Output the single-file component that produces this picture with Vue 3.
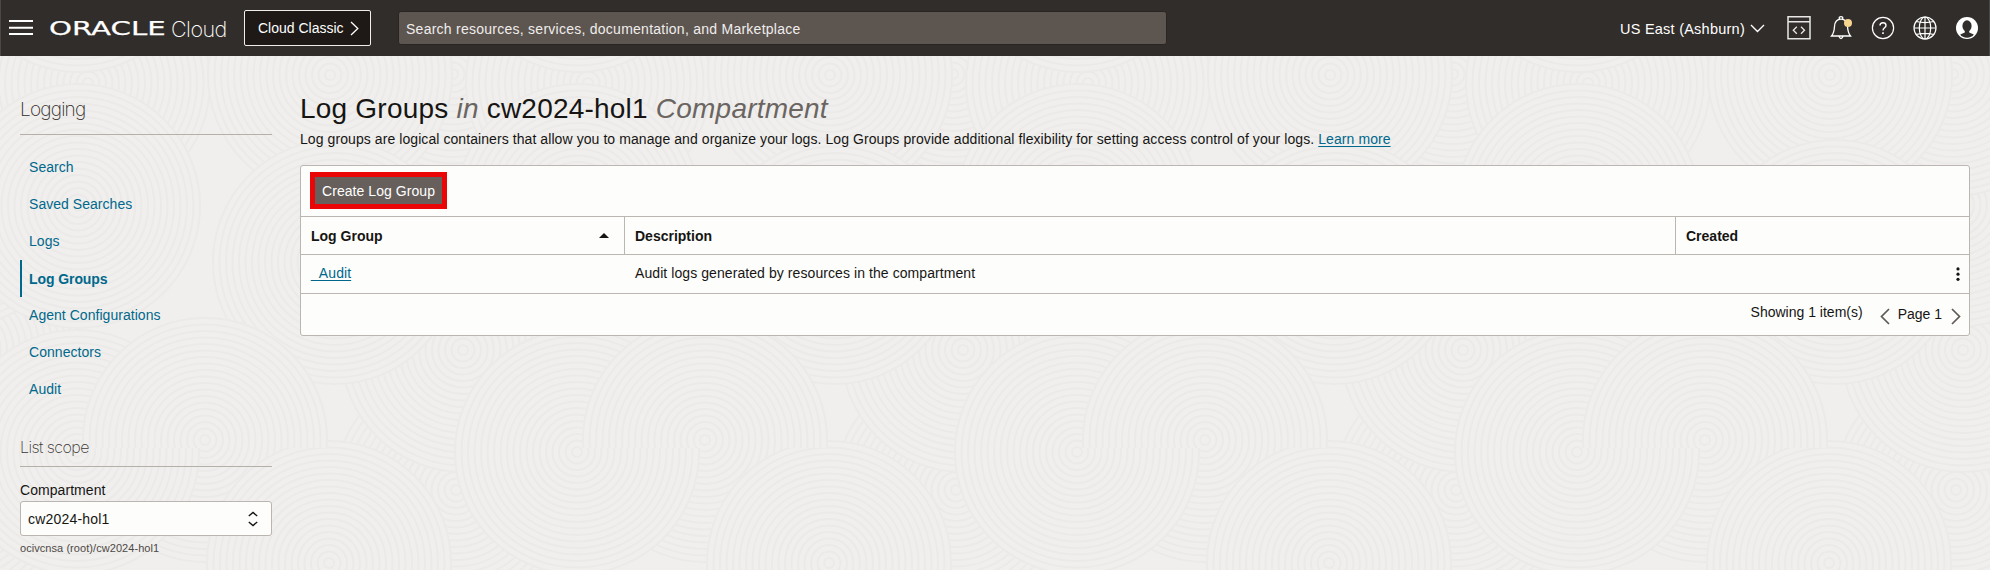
<script setup>
const nav = ['Search', 'Saved Searches', 'Logs', 'Log Groups', 'Agent Configurations', 'Connectors', 'Audit']
const selected = 'Log Groups'
const radii = Array.from({ length: 19 }, (_, i) => 122 - i * 6.5)
const tileDiscs = [
  [456, 490], [463, 350], [456, 205], [453, 74], [88, 83], [330, 75], [78, -50],
  [335, 262], [78, 206], [205, 440], [77, 452], [329, 563],
]
const tiles = [-500, 0, 500, 1000, 1500]
const discs = tileDiscs.flatMap(([x, y]) => tiles.map(t => ({ x: x + t, y })))
const overlaps = tiles.map(t => t + 205)
</script>

<template>
  <div class="page">
    <svg class="backdrop" width="1990" height="570" viewBox="0 0 1990 570" aria-hidden="true">
      <defs>
        <g id="ripple">
          <circle v-for="r in radii" :key="r" :r="r" fill="#f0efed" stroke="#ebeae8" stroke-width="2" />
        </g>
        <clipPath id="upper"><rect x="0" y="0" width="1990" height="448" /></clipPath>
      </defs>
      <use v-for="(d, i) in discs" :key="i" href="#ripple" :x="d.x" :y="d.y" />
      <g clip-path="url(#upper)">
        <use v-for="x in overlaps" :key="x" href="#ripple" :x="x" y="440" />
      </g>
    </svg>

    <header class="topbar">
      <svg class="burger" width="24" height="16" viewBox="0 0 24 16"><path d="M0 1h24M0 7.8h24M0 14h24" stroke="#fff" stroke-width="2" /></svg>
      <div class="brand"><span class="oracle"><span>ORACLE</span></span><span class="cloud">Cloud</span></div>
      <button class="classic">
        <span>Cloud Classic</span>
        <svg width="9" height="15" viewBox="0 0 9 15"><path d="M1 1l6.800 6.500L1 14" fill="none" stroke="#fff" stroke-width="1.3" /></svg>
      </button>
      <div class="search">Search resources, services, documentation, and Marketplace</div>
      <div class="region">
        <span>US East (Ashburn)</span>
        <svg width="15" height="9" viewBox="0 0 15 9"><path d="M1 1l6.500 6.500L14 1" fill="none" stroke="#fff" stroke-width="1.4" /></svg>
      </div>
      <svg class="icon code" width="24" height="24" viewBox="0 0 24 24" fill="none" stroke="#e8e7e5" stroke-width="1.500">
        <path d="M1 .8h22v22H1zM1 5.700h22" /><path d="M9.800 10.800L6.300 14.200l3.500 3.500M14 10.800l3.500 3.400-3.500 3.500" stroke-width="1.300" />
      </svg>
      <svg class="icon bell" width="24" height="26" viewBox="0 0 24 26" fill="none" stroke="#fff" stroke-width="1.300">
        <path d="M1.500 21c2.600-3 2.700-5 3-9.500C4.800 7 7 4.200 11 4.200s6.200 2.800 6.500 7.300c.3 4.500.5 6.500 3 9.500zM9.300 4V2.200q1.700-1.300 3.400 0V4M9 21.500q2 4 4 0" />
        <circle cx="18" cy="8" r="4" fill="#f6d58f" stroke="none" />
      </svg>
      <svg class="icon help" width="24" height="24" viewBox="0 0 24 24" fill="none" stroke="#fff" stroke-width="1.200">
        <circle cx="12" cy="12" r="10.600" /><path d="M9 9.600C9 5.800 15 5.900 15 9.500c0 2.400-3 2.300-3 5.100" stroke-width="1.400" /><path d="M12 16.200v1.800" stroke-width="1.600" />
      </svg>
      <svg class="icon globe" width="24" height="24" viewBox="0 0 24 24" fill="none" stroke="#fff" stroke-width="1.200">
        <circle cx="12" cy="12" r="11" /><ellipse cx="12" cy="12" rx="5.700" ry="11" /><path d="M12 1v22M1 12h22M3.200 5.500q8.800 2.200 17.600 0M3.200 18.500q8.800-2.200 17.600 0" />
      </svg>
      <svg class="icon user" width="24" height="24" viewBox="0 0 24 24">
        <circle cx="12" cy="12" r="11" fill="#fff" /><ellipse cx="12" cy="10" rx="4.600" ry="5.700" fill="#312d2a" /><path d="M9.800 14h4.400v2.600l4.600 2c-2.500 4.200-11.100 4.200-13.600 0l4.600-2z" fill="#312d2a" />
      </svg>
    </header>

    <div class="body">
      <aside class="sidebar">
        <h2 class="side-title">Logging</h2>
        <nav>
          <a v-for="n in nav" :key="n" class="nav-item" :class="{ active: n === selected }"><span>{{ n }}</span></a>
        </nav>
        <h3 class="scope-title">List scope</h3>
        <label class="field-label">Compartment</label>
        <div class="select">
          <span>cw2024-hol1</span>
          <svg width="10" height="16" viewBox="0 0 10 16" fill="none" stroke="#161513" stroke-width="1.400"><path d="M.8 5L5 1.500 9.200 5M.8 11L5 14.500 9.200 11" /></svg>
        </div>
        <div class="hint">ocivcnsa (root)/cw2024-hol1</div>
      </aside>

      <main class="main">
        <h1>Log Groups <i>in</i> cw2024-hol1 <i>Compartment</i></h1>
        <p class="intro">Log groups are logical containers that allow you to manage and organize your logs. Log Groups provide additional flexibility for setting access control of your logs. <a>Learn more</a></p>
        <section class="panel">
          <div class="toolbar"><button class="create">Create Log Group</button></div>
          <div class="row head">
            <div class="cell"><span>Log Group</span><svg width="10" height="5" viewBox="0 0 10 5"><path d="M0 5L5 0l5 5z" fill="#161513" /></svg></div>
            <div class="cell">Description</div>
            <div class="cell">Created</div>
          </div>
          <div class="row data">
            <div class="cell"><a class="audit">_Audit</a></div>
            <div class="cell">Audit logs generated by resources in the compartment</div>
            <div class="cell end"><svg width="4" height="14" viewBox="0 0 4 14" fill="#161513"><circle cx="2" cy="1.900" r="1.600" /><circle cx="2" cy="7.200" r="1.600" /><circle cx="2" cy="12.300" r="1.600" /></svg></div>
          </div>
          <div class="pager">
            <span class="count">Showing 1 item(s)</span>
            <svg class="prev" width="10" height="17" viewBox="0 0 10 17"><path d="M9 1L1.500 8.500 9 16" fill="none" stroke="#5f5a56" stroke-width="1.700" /></svg>
            <span class="pg">Page 1</span>
            <svg class="next" width="10" height="17" viewBox="0 0 10 17"><path d="M1 1l7.500 7.500L1 16" fill="none" stroke="#5f5a56" stroke-width="1.700" /></svg>
          </div>
        </section>
      </main>
    </div>
  </div>
</template>

<style>
body { margin: 0; }
</style>
<style scoped>
* { box-sizing: border-box; }
.page { position: relative; width: 1990px; height: 570px; overflow: hidden; background: #f0efed; color: #161513; font: 14px/20px "Liberation Sans", Arial, sans-serif; }
.backdrop { position: absolute; left: 0; top: 0; }
h1, h2, h3, p { margin: 0; font-weight: 400; }
svg { display: block; flex: none; }
button { font: inherit; padding: 0; margin: 0; }
.topbar { position: relative; display: flex; align-items: center; height: 56px; background: #312d2a; border-left: 1px solid #4b4744; border-right: 1px solid #4b4744; color: #fff; white-space: nowrap; }
.burger { margin-left: 8px; }
.brand { display: flex; margin-left: 16px; width: 195px; height: 30px; align-items: center; }
.oracle { width: 122px; }
.oracle span { display: inline-block; font: 20px/30px "DejaVu Sans", sans-serif; transform: scaleX(1.460); transform-origin: 0 50%; -webkit-text-stroke: .25px #fff; }
.cloud { font: 200 21.500px/30px Inter, sans-serif; letter-spacing: -.5px; padding-top: 1px; }
.classic { display: flex; align-items: center; width: 127px; height: 36px; padding-left: 13px; gap: 6px; background: #1e1916; border: 1px solid #f1efed; border-radius: 2px; color: #fff; }
.search { width: 769px; height: 34px; margin-left: 27px; padding: 1px 0 0 7px; line-height: 32px; letter-spacing: .255px; background: #5d5550; border: 1px solid #2a2522; border-radius: 3px; color: #efedeb; }
.region { display: flex; align-items: center; gap: 5px; margin-left: 453px; width: 145px; padding-top: 1px; }
.region span { font-size: 14.500px; letter-spacing: .240px; }
.code { margin-left: 22px; }
.bell { margin-left: 19px; }
.help { margin-left: 17px; }
.globe { margin-left: 18px; }
.user { margin-left: 18px; }
.body { position: relative; display: flex; }
.sidebar { width: 252px; margin-left: 20px; }
.side-title { height: 79px; border-bottom: 1px solid #b5b0a8; padding-top: 40px; font: 200 19px/28px Inter, sans-serif; letter-spacing: -.8px; color: #2f2b28; }
nav { margin-top: 14px; }
.nav-item { display: flex; align-items: center; height: 37px; padding: 0 0 2px 9px; color: #00688c; letter-spacing: .04px; }
.nav-item.active { border-left: 2px solid #00688c; padding: 0 0 0 7px; font-weight: 700; letter-spacing: -.08px; }
.scope-title { height: 59px; padding-top: 27px; border-bottom: 1px solid #b5b0a8; font: 200 16px/24px Inter, sans-serif; color: #3a3633; letter-spacing: -.55px; }
.field-label { display: block; margin-top: 13px; height: 21px; line-height: 20px; letter-spacing: .06px; }
.select { display: flex; align-items: center; justify-content: space-between; height: 35px; padding: 0 13px 0 7px; background: #fdfdfb; border: 1px solid #bab5b0; border-radius: 3px; letter-spacing: .2px; }
.hint { margin-top: 5px; font-size: 11px; line-height: 15px; color: #4d4946; letter-spacing: .06px; }
.main { width: 1670px; margin-left: 28px; }
h1 { margin-top: 36px; height: 36px; font-size: 28px; line-height: 34px; letter-spacing: .215px; white-space: nowrap; }
i { color: #6b6562; }
.intro { margin-top: 1px; height: 36px; line-height: 20px; letter-spacing: .077px; white-space: nowrap; }
a { color: #00688c; }
.intro a, .audit { text-decoration: underline; text-underline-offset: 2px; }
.panel { height: 171px; border: 1px solid #bbb6b1; border-radius: 3px; background: #fdfdfb; }
.toolbar { height: 51px; padding: 6px 9px; border-bottom: 1px solid #bbb6b1; }
.create { display: block; width: 137px; height: 37px; background: #665f5b; border: 5px solid #ea0606; color: #fff; letter-spacing: .06px; white-space: nowrap; }
.row { display: grid; grid-template-columns: 323px 1051px 1fr; border-bottom: 1px solid #bbb6b1; }
.head { height: 38px; font-weight: 700; }
.data { height: 39px; letter-spacing: .077px; }
.cell { display: flex; align-items: center; padding-left: 10px; }
.data .cell { padding-bottom: 2px; }
.data .cell:nth-child(2) { padding-left: 11px; }
.head .cell + .cell { border-left: 1px solid #bbb6b1; }
.head .cell:first-child { justify-content: space-between; padding-right: 15px; }
.data .end { justify-content: flex-end; padding: 0 9px 0 0; }
.pager { display: flex; justify-content: flex-end; padding: 8px 8px 0 0; }
.prev { margin: 6px 8px 0 17px; }
.pg { margin-top: 2px; }
.next { margin: 6px 0 0 9px; }
</style>
